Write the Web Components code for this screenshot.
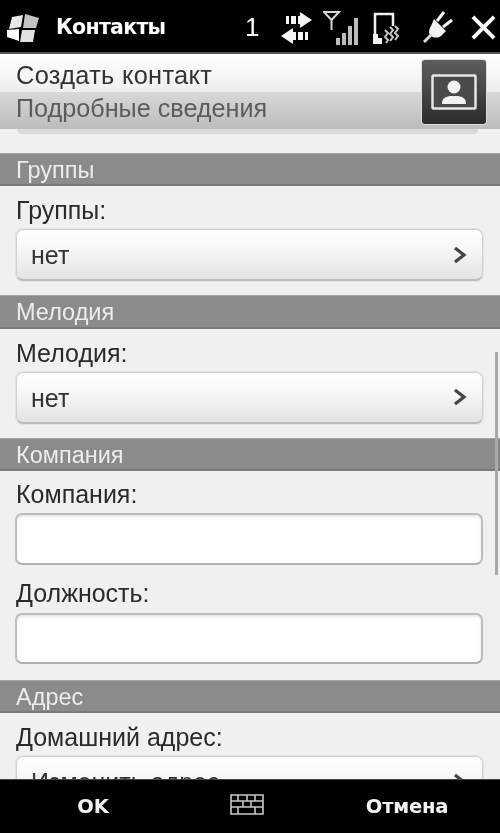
<!DOCTYPE html>
<html lang="ru">
<head>
<meta charset="utf-8">
<title>Контакты</title>
<style>
	html, body {
		margin: 0;
		padding: 0;
		height: 100%;
		background: #000;
	}
	body {
		overflow: hidden;
		font-family: "Liberation Sans", Arial, sans-serif;
	}
	wm-screen {
		filter: blur(0.5px);
	}
</style>
</head>
<body>
<wm-screen>
	<wm-titlebar slot="top" title-text="Контакты"></wm-titlebar>
	<wm-header slot="top" line-one="Создать контакт" line-two="Подробные сведения"></wm-header>
	<wm-section heading="Группы">
		<wm-field label="Группы:" kind="picker" value="нет"></wm-field>
	</wm-section>
	<wm-section heading="Мелодия">
		<wm-field label="Мелодия:" kind="picker" value="нет"></wm-field>
	</wm-section>
	<wm-section heading="Компания">
		<wm-field label="Компания:" kind="input"></wm-field>
		<wm-field label="Должность:" kind="input" second></wm-field>
	</wm-section>
	<wm-section heading="Адрес">
		<wm-field label="Домашний адрес:" kind="picker" value="Изменить адрес"></wm-field>
	</wm-section>
	<wm-softbar slot="bottom" left="OK" right="Отмена"></wm-softbar>
</wm-screen>

<script>
class WmScreen extends HTMLElement {
	constructor() {
		super();
		this.attachShadow({ mode: 'open' });
	}

	connectedCallback() {
		this.shadowRoot.innerHTML = `
		<style>
			:host {
				display: flex;
				flex-direction: column;
				width: 500px;
				height: 833px;
				overflow: hidden;
				background: #000;
			}
			.scroll {
				position: relative;
				flex: 1;
				min-height: 0;
				overflow: hidden;
				background: #f0f0f0;
				padding-top: 17.750px;
			}
			.thumb {
				position: absolute;
				right: 2px;
				top: 217px;
				width: 3px;
				height: 223px;
				background: #a9a9a9;
			}
		</style>
		<slot name="top"></slot>
		<div class="scroll">
			<slot></slot>
			<div class="thumb"></div>
		</div>
		<slot name="bottom"></slot>
		`;
	}
}

customElements.define('wm-screen', WmScreen);

class WmTitlebar extends HTMLElement {
	constructor() {
		super();
		this.attachShadow({ mode: 'open' });
	}

	connectedCallback() {
		this.shadowRoot.innerHTML = `
		<style>
			:host {
				display: flex;
				align-items: center;
				height: 52px;
				background: #000;
				color: #fff;
				border-bottom: 2px solid #555;
			}
			.logo {
				width: 34px;
				height: 32px;
				margin-left: 6px;
				margin-top: 3px;
			}
			.title {
				margin-left: 16px;
				padding-top: 2px;
				font: bold 20.5px "DejaVu Sans", sans-serif;
				letter-spacing: -0.7px;
				width: 189px;
			}
			.num {
				font: 26px "Liberation Sans", sans-serif;
				padding-top: 2px;
				width: 36px;
			}
			svg { display: block; flex: none; }
			.arrows { margin-top: 3px; }
			.signal { margin-left: 10px; margin-top: 3px; }
			.device { margin-left: 14px; margin-top: 3px; }
			.plug { margin-left: 24px; margin-top: 2px; }
			.close { margin-left: 16px; margin-top: 2px; }
		</style>
		<svg class="logo" viewBox="0 0 34 32">
			<path fill="#e8e8e8" d="M6 5l11-2-2 12-12 2z"/>
			<path fill="#c4c4c4" d="M19 2l14 4-3 10-13 0z"/>
			<path fill="#fff" d="M1 18l12-1 0 12-12-4z"/>
			<path fill="#e2e2e2" d="M16 18h13l-2 12H14z"/>
		</svg>
		<span class="title">${this.getAttribute('title-text')}</span>
		<span class="num">1</span>
		<svg class="arrows" width="32" height="32" viewBox="0 0 32 32" fill="#f4f4f4">
			<path d="M19 0l12 8-12 8v-4h-2V4h2zM5 4h3v8H5zM10 4h5v8h-5z"/>
			<path d="M12 16L0 24l12 8v-4h3v-8h-3zM17 20h5v8h-5zM24 20h3v8h-3z"/>
		</svg>
		<svg class="signal" width="36" height="34" viewBox="0 0 36 34">
			<path fill="none" stroke="#d8d8d8" stroke-width="2" d="M1 1h15L8.500 9zM8.500 8v11"/>
			<path fill="#bdbdbd" d="M13 27h4v7h-4zM19 22h4v12h-4zM25 15h4v19h-4zM31 7h4v27h-4z"/>
		</svg>
		<svg class="device" width="26" height="32" viewBox="0 0 26 32">
			<path fill="none" stroke="#f0f0f0" stroke-width="2.500" d="M2 29V2h18v12"/>
			<path fill="#f0f0f0" d="M0 22h5v4h4v6H0z"/>
			<path fill="none" stroke="#c8c8c8" stroke-width="2" d="M12 18l3 3-3 4 3 3-2 3M17 15l3 3-3 4 3 3-3 4M22 14l3 3-3 4 3 3-3 4"/>
		</svg>
		<svg class="plug" width="32" height="34" viewBox="0 0 32 34">
			<path fill="#f2f2f2" d="M11 9l12 12-5 5c-3 2-7 2-10 0s-2-7 0-10z"/>
			<path stroke="#f2f2f2" stroke-width="3" fill="none" d="M14 11l7-9M20 17l9-7"/>
			<path stroke="#ddd" stroke-width="3" fill="none" d="M9 24l-8 8"/>
		</svg>
		<svg class="close" width="25" height="25" viewBox="0 0 26 26">
			<path stroke="#fff" stroke-width="4" fill="none" d="M2 2l22 22M24 2L2 24"/>
		</svg>
		`;
	}
}

customElements.define('wm-titlebar', WmTitlebar);

class WmHeader extends HTMLElement {
	constructor() {
		super();
		this.attachShadow({ mode: 'open' });
	}

	connectedCallback() {
		this.shadowRoot.innerHTML = `
		<style>
			:host {
				display: block;
				position: relative;
				height: 81px;
				background: #f0f0f0;
			}
			.tab {
				height: 75px;
				display: flex;
				flex-direction: column;
				background: linear-gradient(#fff 0, #eeeeee 38px, #d9d8d9 38px, #bdbcbd 75px);
				padding-left: 16px;
			}
			.lip {
				height: 5px;
				margin: 0 22px 0 17px;
				background: #dadada;
				border-radius: 0 0 4px 4px;
			}
			.one { color: #333; height: 38px; line-height: 42px; font-size: 25.400px; letter-spacing: 0.3px; }
			.two { color: #5c5c5c; line-height: 32px; font-size: 25.200px; }
			.avatar {
				position: absolute;
				right: 14px;
				top: 6px;
				width: 64px;
				height: 64px;
				box-sizing: border-box;
				border-radius: 3px;
				background: linear-gradient(#5d5d5d, #454545 50%, #2c2c2c);
				box-shadow: 0 0 0 1px #ddd;
				display: flex;
				align-items: center;
				justify-content: center;
			}
		</style>
		<div class="tab">
			<div class="one">${this.getAttribute('line-one')}</div>
			<div class="two">${this.getAttribute('line-two')}</div>
		</div>
		<div class="lip"></div>
		<div class="avatar">
			<svg width="46" height="36" viewBox="0 0 46 36">
				<rect x="1.500" y="1.500" width="43" height="33" rx="1" fill="#4a4a4a" stroke="#e6e6e6" stroke-width="2.500"/>
				<circle cx="23" cy="13" r="6.500" fill="#f2f2f2"/>
				<path fill="#f2f2f2" d="M11 30c0-5 2-7 8-8h8c6 1 8 3 8 8z"/>
			</svg>
		</div>
		`;
	}
}

customElements.define('wm-header', WmHeader);

class WmSection extends HTMLElement {
	constructor() {
		super();
		this.attachShadow({ mode: 'open' });
	}

	connectedCallback() {
		this.shadowRoot.innerHTML = `
		<style>
			:host {
				display: block;
			}
			.bar {
				height: 33.500px;
				box-sizing: border-box;
				background: #8d8a8c;
				border-top: 1px solid #a5a3a4;
				border-bottom: 2px solid #7b797a;
				color: #ededed;
				font-size: 23.500px;
				line-height: 32px;
				padding-left: 16px;
			}
			.body {
				padding: 0 17px 14px 16px;
			}
		</style>
		<div class="bar">${this.getAttribute('heading')}</div>
		<div class="body"><slot></slot></div>
		`;
	}
}

customElements.define('wm-section', WmSection);

class WmField extends HTMLElement {
	constructor() {
		super();
		this.attachShadow({ mode: 'open' });
	}

	connectedCallback() {
		const kind = this.getAttribute('kind');
		const value = this.getAttribute('value') || '';
		const chevron = `
			<svg width="14" height="20" viewBox="0 0 14 20">
				<path fill="none" stroke="#444" stroke-width="3.200" d="M2 3l9 7-9 7"/>
			</svg>`;
		this.shadowRoot.innerHTML = `
		<style>
			:host {
				display: block;
			}
			:host([kind="input"]) .label {
				height: 42px;
				line-height: 47px;
			}
			:host([second]) {
				margin-bottom: 1.500px;
			}
			:host([second]) .label {
				height: 48px;
				line-height: 57px;
			}
			.label {
				color: #2a2a2a;
				font-size: 25px;
				height: 43px;
				line-height: 49px;
			}
			.box {
				height: 52px;
				box-sizing: border-box;
				border-radius: 7px;
			}
			.picker {
				display: flex;
				align-items: center;
				justify-content: space-between;
				padding: 0 15px 0 14px;
				background: linear-gradient(#fff, #f6f5f6 45%, #e4e3e4);
				border: 1px solid #d0d0d0;
				border-bottom: 2px solid #bcbabb;
				box-shadow: 0 0 0 1px #e3e3e3;
				color: #333;
				font-size: 25px;
			}
			.picker span {
				padding-top: 2px;
			}
			.input {
				height: 51.500px;
				background: #fff;
				border: 2px solid #bdbcbd;
				border-bottom-color: #b0afb0;
				box-shadow: inset 0 2px 3px #e8e8e8;
				margin-left: -1px;
			}
		</style>
		<div class="label">${this.getAttribute('label')}</div>
		${kind === 'picker'
			? `<div class="box picker"><span>${value}</span>${chevron}</div>`
			: `<div class="box input"></div>`}
		`;
	}
}

customElements.define('wm-field', WmField);

class WmSoftbar extends HTMLElement {
	constructor() {
		super();
		this.attachShadow({ mode: 'open' });
	}

	connectedCallback() {
		this.shadowRoot.innerHTML = `
		<style>
			:host {
				display: grid;
				grid-template-columns: 186px 1fr 186px;
				align-items: center;
				height: 54px;
				background: #000;
				color: #f2f2f2;
				font: bold 19.500px "DejaVu Sans", sans-serif;
				border-top: 1px solid #444;
				box-sizing: border-box;
			}
			span { text-align: center; }
			.right { letter-spacing: -0.2px; }
			svg { display: block; margin: 0 0 4px 44px; }
		</style>
		<span class="left">${this.getAttribute('left')}</span>
		<svg width="34" height="21" viewBox="0 0 34 21">
			<path fill="none" stroke="#c8c8c8" stroke-width="1.600" d="M1 1h32v19H1zM1 7h32M1 13h32M8 1v6M17 1v6M25 1v6M13 7v6M21 7v6M8 13v7M25 13v7"/>
		</svg>
		<span class="right">${this.getAttribute('right')}</span>
		`;
	}
}

customElements.define('wm-softbar', WmSoftbar);
</script>
</body>
</html>
